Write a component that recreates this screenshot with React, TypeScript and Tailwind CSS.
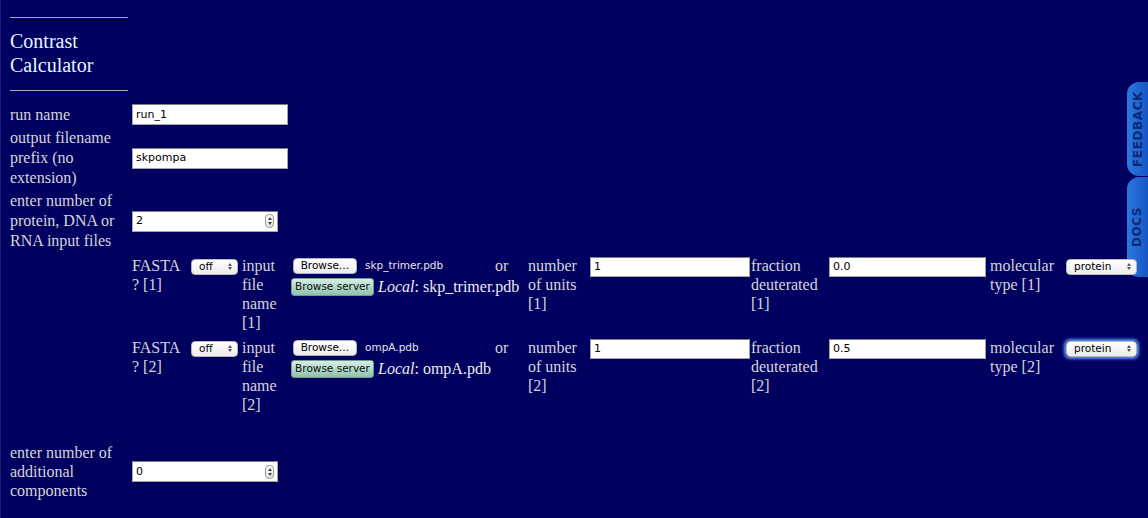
import React from "react";

const ui = "font-['DejaVu_Sans','Liberation_Sans',sans-serif]";

function TextBox({ value, w, h = 21 }: { value: string; w: number; h?: number }) {
  return (
    <div
      className={`${ui} flex items-center bg-white border border-[#a4a4a4] border-t-[#7c7c7c] pl-[3px] text-[11px] text-black`}
      style={{ width: w, height: h }}
    >
      {value}
    </div>
  );
}

function NumberBox({ value }: { value: string }) {
  return (
    <div className={`${ui} flex items-center justify-between bg-white border border-[#a4a4a4] border-t-[#7c7c7c] pl-[3px] pr-[3px] w-[146px] h-[21px] text-[11px] text-black`}>
      <span>{value}</span>
      <span className="flex flex-col items-center justify-center gap-[2px] w-[9px] h-[14px] rounded-[4px] border border-[#9a9a9a] bg-gradient-to-b from-white to-[#e2e2e2]">
        <span className="block w-0 h-0 border-l-[2.5px] border-r-[2.5px] border-b-[3px] border-l-transparent border-r-transparent border-b-[#444]" />
        <span className="block w-0 h-0 border-l-[2.5px] border-r-[2.5px] border-t-[3px] border-l-transparent border-r-transparent border-t-[#444]" />
      </span>
    </div>
  );
}

function Select({ value, w, glow }: { value: string; w: number; glow?: boolean }) {
  return (
    <div
      className={`${ui} relative flex items-center justify-between h-[16px] rounded-[4px] bg-gradient-to-b from-white to-[#ececec] border border-[#b8b8b8] pl-[7px] pr-[5px] text-[10.5px] text-black ${glow ? "shadow-[0_0_3px_2px_#5c93f0]" : ""}`}
      style={{ width: w }}
    >
      <span className="leading-none">{value}</span>
      <span className="flex flex-col items-center gap-[1.5px]">
        <span className="block w-0 h-0 border-l-[2.5px] border-r-[2.5px] border-b-[3px] border-l-transparent border-r-transparent border-b-[#555]" />
        <span className="block w-0 h-0 border-l-[2.5px] border-r-[2.5px] border-t-[3px] border-l-transparent border-r-transparent border-t-[#555]" />
      </span>
    </div>
  );
}

function FileRow({ n, file, units, frac, glow }: { n: number; file: string; units: string; frac: string; glow?: boolean }) {
  return (
    <div className="flex items-start leading-[19px]">
      <div className="w-[59px]">FASTA<br />? [{n}]</div>
      <div className="w-[51px] pt-[2.5px]"><Select value="off" w={47} /></div>
      <div className="w-[49px]">input<br />file<br />name<br />[{n}]</div>
      <div className="w-[237px]">
        <div className="flex items-center h-[19px]">
          <div className="flex items-center w-[202px] pl-[2px]">
            <span className={`${ui} flex items-center justify-center w-[64px] h-[16px] rounded-[4px] bg-gradient-to-b from-white to-[#ececec] border border-[#b4b4b4] text-[10.5px] text-black`}>
              Browse…
            </span>
            <span className={`${ui} ml-[8px] text-[10.5px] text-[#e4e4e4]`}>{file}</span>
          </div>
          <span className="ml-[2px]">or</span>
        </div>
        <div className="flex items-center h-[23px] gap-[4px]">
          <span className={`${ui} flex items-center justify-center w-[83px] h-[18px] rounded-[3px] bg-gradient-to-b from-[#d6f0e6] to-[#8fc1ac] border border-[#6f9c8a] text-[10.5px] text-[#101010] whitespace-nowrap`}>
            Browse server
          </span>
          <span className="text-[#ececec]"><i>Local</i>: {file}</span>
        </div>
      </div>
      <div className="w-[62px]">number<br />of units<br />[{n}]</div>
      <div className="w-[161px] pt-[0.5px]"><TextBox value={units} w={160} h={20} /></div>
      <div className="w-[78px]">fraction<br />deuterated<br />[{n}]</div>
      <div className="w-[161px] pt-[0.5px]"><TextBox value={frac} w={157} h={20} /></div>
      <div className="w-[76px]">molecular<br />type [{n}]</div>
      <div className="pt-[2.5px]"><Select value="protein" w={71} glow={glow} /></div>
    </div>
  );
}

export default function App() {
  return (
    <div className="relative min-h-[518px] overflow-hidden bg-[#000060] border-l border-[#1c1c78] pl-[9px] font-['Liberation_Serif',serif] text-[16px] text-[#d6d6d6]">
      {/* side tabs */}
      <div className="absolute right-0 top-[82px] w-[21px] h-[94px] rounded-l-[12px] bg-gradient-to-r from-[#2c78e0] to-[#1656c2] flex items-center justify-center">
        <span className="-rotate-90 whitespace-nowrap font-['DejaVu_Sans',sans-serif] font-bold text-[12px] tracking-[0.6px] text-[#0c2a7a]">FEEDBACK</span>
      </div>
      <div className="absolute right-0 top-[177px] w-[21px] h-[100px] rounded-l-[12px] bg-gradient-to-r from-[#2c78e0] to-[#1656c2] flex items-center justify-center">
        <span className="-rotate-90 whitespace-nowrap font-['DejaVu_Sans',sans-serif] font-bold text-[12px] tracking-[0.6px] text-[#0c2a7a]">DOCS</span>
      </div>

      <div className="pt-[17px]">
        <div className="w-[118px] h-px bg-[#a8a8b8]" />
        <div className="mt-[11px] text-[20px] leading-[24px] text-[#e8f8ff]">Contrast<br />Calculator</div>
        <div className="mt-[13px] w-[118px] h-px bg-[#a8a8b8]" />
      </div>

      <div className="mt-[13px] grid grid-cols-[122px_auto] gap-y-[3px] items-center leading-[20px]">
        <div>run name</div>
        <TextBox value="run_1" w={156} />
        <div>output filename<br />prefix (no<br />extension)</div>
        <TextBox value="skpompa" w={156} />
        <div>enter number of<br />protein, DNA or<br />RNA input files</div>
        <NumberBox value="2" />
      </div>

      <div className="ml-[122px] mt-[5px] flex flex-col gap-[6px]">
        <FileRow n={1} file="skp_trimer.pdb" units="1" frac="0.0" />
        <FileRow n={2} file="ompA.pdb" units="1" frac="0.5" glow />
      </div>

      <div className="mt-[29px] grid grid-cols-[122px_auto] items-center leading-[19px]">
        <div>enter number of<br />additional<br />components</div>
        <NumberBox value="0" />
      </div>
    </div>
  );
}
